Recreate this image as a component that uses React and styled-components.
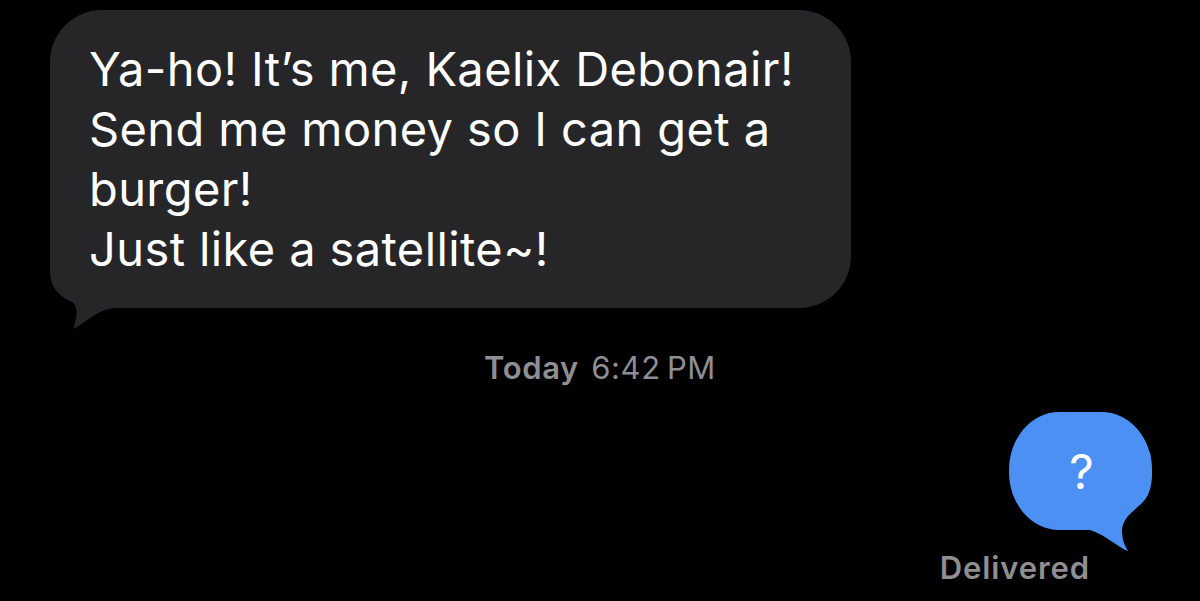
import React from "react";
import styled, { createGlobalStyle } from "styled-components";

const Global = createGlobalStyle`
  html, body {
    margin: 0;
    padding: 0;
    background: #000;
  }
  body {
    font-family: Inter, "Noto Sans", "Liberation Sans", sans-serif;
    -webkit-font-smoothing: antialiased;
  }
`;

const Page = styled.div`
  width: 1200px;
  height: 601px;
  overflow: hidden;
  background: #000;
  display: flex;
  flex-direction: column;
  padding-top: 10px;
  box-sizing: border-box;
`;

const IncomingBubble = styled.div`
  position: relative;
  margin-left: 50px;
  width: 801px;
  height: 298px;
  box-sizing: border-box;
  padding: 29px 0 0 39px;
  background: #262629;
  border-radius: 52px;
  color: #fff;
  font-size: 47px;
  line-height: 60px;
  letter-spacing: 0.4px;
`;

const Line = styled.div`
  position: relative;
  white-space: nowrap;
`;

const Tail = styled.svg`
  position: absolute;
  overflow: visible;
  pointer-events: none;
`;

const Timestamp = styled.div`
  margin-top: 42px;
  text-align: center;
  color: #8e8e93;
  font-size: 31px;
  line-height: 36px;
  letter-spacing: 0.6px;
  word-spacing: 3px;
`;

const Day = styled.span`
  font-weight: 600;
`;

const OutgoingRow = styled.div`
  display: flex;
  justify-content: flex-end;
  margin-top: 26px;
  padding-right: 48px;
`;

const OutgoingBubble = styled.div`
  position: relative;
  width: 143px;
  height: 118px;
  background: #4b90f2;
  border-radius: 50px 50px 70px 50px / 58px 58px 60px 58px;
  display: flex;
  align-items: center;
  justify-content: center;
  color: #fff;
  font-size: 48px;
  font-weight: 400;
  line-height: 1;
`;

const BubbleText = styled.span`
  position: relative;
  top: 1px;
  left: 1px;
`;

const Status = styled.div`
  margin-top: 20px;
  align-self: flex-end;
  margin-right: 110px;
  color: #8e8e93;
  font-size: 31px;
  font-weight: 600;
  line-height: 36px;
  letter-spacing: 0.9px;
`;

export default function App() {
  return (
    <>
      <Global />
      <Page>
        <IncomingBubble>
          <Tail
            style={{ left: 0, top: 230 }}
            width="80"
            height="100"
            viewBox="0 230 80 100"
          >
            <path
              d="M0 230 L0 262 C0 276 8 286 22 292 C28 296 28 306 23 319 C34 314 46 300 64 298 L80 298 L80 230 Z"
              fill="#262629"
            />
          </Tail>
          <Line>Ya-ho! It’s me, Kaelix Debonair!</Line>
          <Line>Send me money so I can get a</Line>
          <Line>burger!</Line>
          <Line>Just like a satellite~!</Line>
        </IncomingBubble>

        <Timestamp>
          <Day>Today</Day> 6:42{"\u202F"}PM
        </Timestamp>

        <OutgoingRow>
          <OutgoingBubble>
            <Tail
              style={{ left: 60, top: 40 }}
              width="83"
              height="100"
              viewBox="60 40 83 100"
            >
              <path
                d="M141 40 L143 58 L143 62 C143 76 139 86 132 92 C124 99 114 106 113 118 C113 128 116 134 119 139 C110 136 95 122 81 118 L60 118 L60 40 Z"
                fill="#4b90f2"
              />
            </Tail>
            <BubbleText>?</BubbleText>
          </OutgoingBubble>
        </OutgoingRow>

        <Status>Delivered</Status>
      </Page>
    </>
  );
}
